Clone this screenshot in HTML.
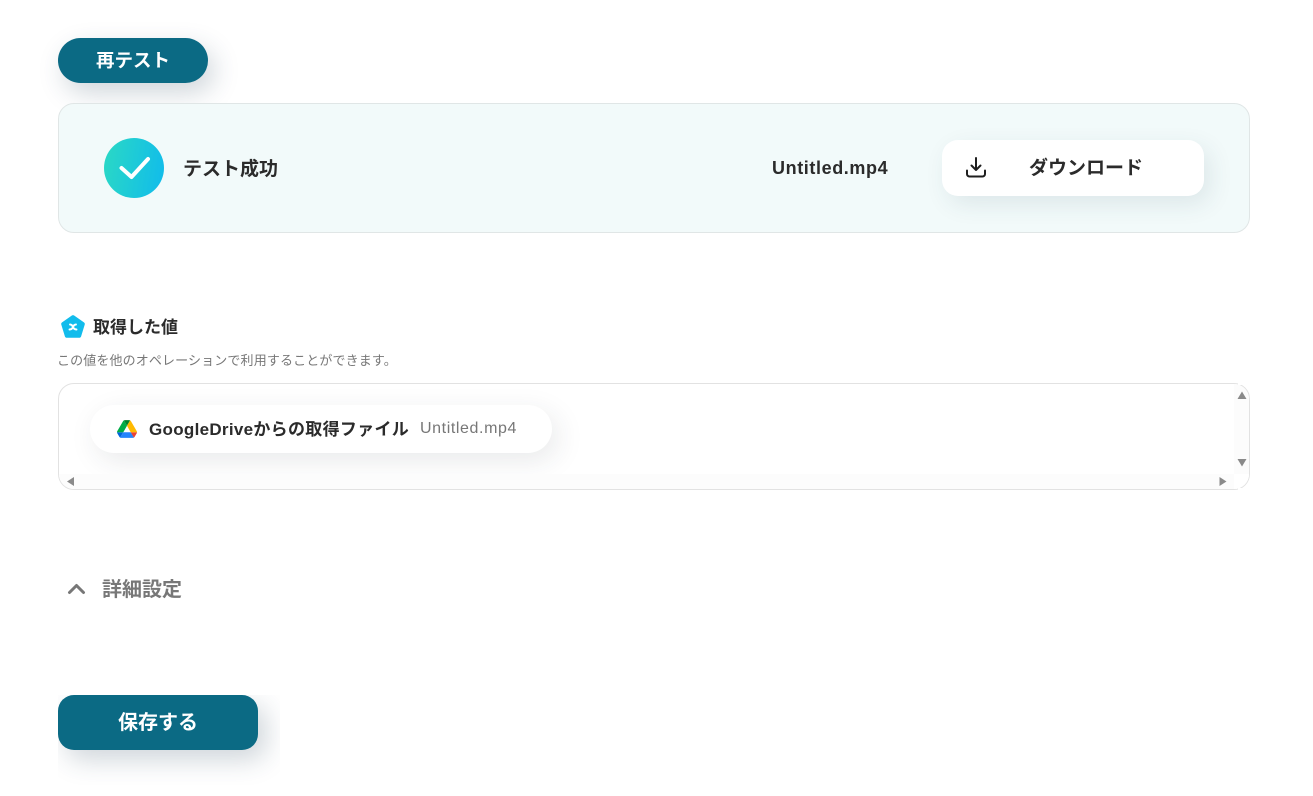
<!DOCTYPE html>
<html lang="ja">
<head>
<meta charset="utf-8">
<title>テスト</title>
<style>
*{box-sizing:border-box;margin:0;padding:0}
html,body{width:1313px;height:796px;background:#fff;overflow:hidden}
body{position:relative;font-family:"Liberation Sans","Noto Sans CJK JP",sans-serif;color:#2b2b2b}
.abs{position:absolute;white-space:nowrap}
.retest{left:58px;top:38px;width:150px;height:45px;border-radius:23px;background:#0b6a84;color:#fff;font-size:18.5px;font-weight:700;line-height:45px;text-align:center;box-shadow:6px 10px 26px rgba(40,70,90,.22)}
.card{left:58px;top:103px;width:1192px;height:130px;border:1px solid #e0e6e6;border-radius:16px;background:#f2fafa}
.circle{left:104px;top:138px;width:60px;height:60px;border-radius:50%;background:linear-gradient(100deg,#2bd9c4,#10bbec)}
.ok{left:183px;top:156px;font-size:19px;font-weight:700;line-height:28px;color:#2b2b2b}
.fname{left:772px;top:156px;font-size:18px;font-weight:700;line-height:24px;letter-spacing:.6px;color:#2b2b2b}
.dl{left:942px;top:140px;width:262px;height:56px;border-radius:16px;background:#fff;box-shadow:6px 8px 24px rgba(40,70,90,.1)}
.dlt{left:1029px;top:155px;font-size:19px;font-weight:700;line-height:28px;color:#2b2b2b}
.h{left:93px;top:316px;font-size:17px;font-weight:700;line-height:24px;color:#2b2b2b}
.sub{left:57px;top:351px;font-size:13px;line-height:20px;letter-spacing:.13px;color:#777}
.box{left:58px;top:383px;width:1192px;height:107px;border:1px solid #e2e2e2;border-radius:16px;background:#fff;overflow:hidden}
.pill{position:absolute;left:31px;top:21px;width:462px;height:48px;border-radius:24px;background:#fff;box-shadow:6px 8px 28px rgba(40,50,60,.1)}
.vs{position:absolute;right:0;top:0;width:15px;height:90px;background:#fcfcfc}
.hs{position:absolute;left:0;bottom:0;height:15px;right:0;background:#fcfcfc}
.corner{position:absolute;right:0;bottom:0;width:15px;height:15px;background:#fff}
.tr{left:1238px;top:382px;width:14px;height:3px;background:#fff}
.br{left:1238px;top:488px;width:14px;height:3px;background:#fff}
.g{left:149px;top:418px;font-size:17px;font-weight:700;line-height:24px;letter-spacing:.3px;color:#2b2b2b}
.u{left:420px;top:417px;font-size:16px;line-height:24px;letter-spacing:.6px;color:#777}
.adv{left:102px;top:576px;font-size:20px;font-weight:700;line-height:28px;color:#777}
.clip{left:58px;top:695px;width:222px;height:90px;overflow:hidden}
.save{position:absolute;left:0;top:0;width:200px;height:55px;border-radius:16px;background:#0b6a84;color:#fff;font-size:20px;font-weight:700;line-height:56px;text-align:center;box-shadow:8px 10px 26px rgba(40,70,90,.22)}
svg{position:absolute;display:block}
</style>
</head>
<body>
<div class="abs retest">再テスト</div>

<div class="abs card"></div>
<div class="abs circle"></div>
<svg style="left:104px;top:138px" width="60" height="60" viewBox="0 0 60 60"><path d="M17.500 30L27.500 39L44 21" fill="none" stroke="#fff" stroke-width="4" stroke-linecap="round" stroke-linejoin="round"/></svg>
<div class="abs ok">テスト成功</div>
<div class="abs fname">Untitled.mp4</div>
<div class="abs dl"></div>
<svg style="left:964px;top:155px" width="24" height="24" viewBox="0 0 24 24" fill="none" stroke="#1f1f1f" stroke-width="2" stroke-linecap="round" stroke-linejoin="round"><path d="M12 3V15M7.500 10.500L12 15L16.500 10.500"/><path d="M3 15.500V19A2.500 2.500 0 0 0 5.500 21.500H18.500A2.500 2.500 0 0 0 21 19V15.500"/></svg>
<div class="abs dlt">ダウンロード</div>

<svg style="left:60px;top:314px" width="26" height="26" viewBox="0 0 26 26"><path d="M13 3.200L22.800 10L19.200 21.800H6.800L3.200 10Z" fill="#12bcec" stroke="#12bcec" stroke-width="4" stroke-linejoin="round"/><path d="M10 10.500Q12 10.500 13 13Q14 15.500 16.500 15.500M16 10.500Q14 10.500 13 13Q12 15.500 9.500 15.500" fill="none" stroke="#fff" stroke-width="1.900" stroke-linecap="round"/></svg>
<div class="abs h">取得した値</div>
<div class="abs sub">この値を他のオペレーションで利用することができます。</div>

<div class="abs box">
  <div class="pill"></div>
  <div class="hs"></div>
  <div class="vs"></div>
  <div class="corner"></div>
</div>
<div class="abs tr"></div>
<div class="abs br"></div>
<svg style="left:1236px;top:391px" width="12" height="9" viewBox="0 0 12 9"><path d="M6 .5L10.500 8H1.500Z" fill="#8a8a8a"/></svg>
<svg style="left:1236px;top:458px" width="12" height="9" viewBox="0 0 12 9"><path d="M1.500 1H10.500L6 8.500Z" fill="#8a8a8a"/></svg>
<svg style="left:66px;top:476px" width="9" height="11" viewBox="0 0 9 11"><path d="M8 1V10L1 5.500Z" fill="#8a8a8a"/></svg>
<svg style="left:1219px;top:476px" width="9" height="11" viewBox="0 0 9 11"><path d="M.5 1V10L7.500 5.500Z" fill="#8a8a8a"/></svg>

<svg style="left:117px;top:420px" width="20" height="18" viewBox="0 0 87.300 78">
<path d="m6.600 66.850 3.850 6.650c.8 1.400 1.950 2.500 3.300 3.300l13.750-23.800h-27.500c0 1.550.4 3.100 1.200 4.500z" fill="#0066da"/>
<path d="m43.650 25-13.750-23.800c-1.350.8-2.500 1.900-3.300 3.300l-25.400 44a9.060 9.060 0 0 0 -1.200 4.500h27.500z" fill="#00ac47"/>
<path d="m73.550 76.800c1.350-.8 2.500-1.900 3.300-3.300l1.600-2.750 7.650-13.250c.8-1.400 1.200-2.950 1.200-4.500h-27.502l5.852 11.500z" fill="#ea4335"/>
<path d="m43.650 25 13.750-23.800c-1.350-.8-2.900-1.200-4.500-1.200h-18.500c-1.600 0-3.150.45-4.500 1.200z" fill="#00832d"/>
<path d="m59.800 53h-32.300l-13.750 23.800c1.350.8 2.900 1.200 4.500 1.200h50.800c1.600 0 3.150-.45 4.500-1.200z" fill="#2684fc"/>
<path d="m73.400 26.500-12.700-22c-.8-1.400-1.950-2.500-3.300-3.300l-13.750 23.800 16.150 28h27.450c0-1.550-.4-3.100-1.200-4.500z" fill="#ffba00"/>
</svg>
<div class="abs g">GoogleDriveからの取得ファイル</div>
<div class="abs u">Untitled.mp4</div>

<svg style="left:66px;top:581px" width="21" height="15" viewBox="0 0 21 15"><path d="M3.500 11.500L10.500 4.500L17.500 11.500" fill="none" stroke="#777" stroke-width="3" stroke-linecap="round" stroke-linejoin="round"/></svg>
<div class="abs adv">詳細設定</div>

<div class="abs clip"><div class="save">保存する</div></div>
</body>
</html>
